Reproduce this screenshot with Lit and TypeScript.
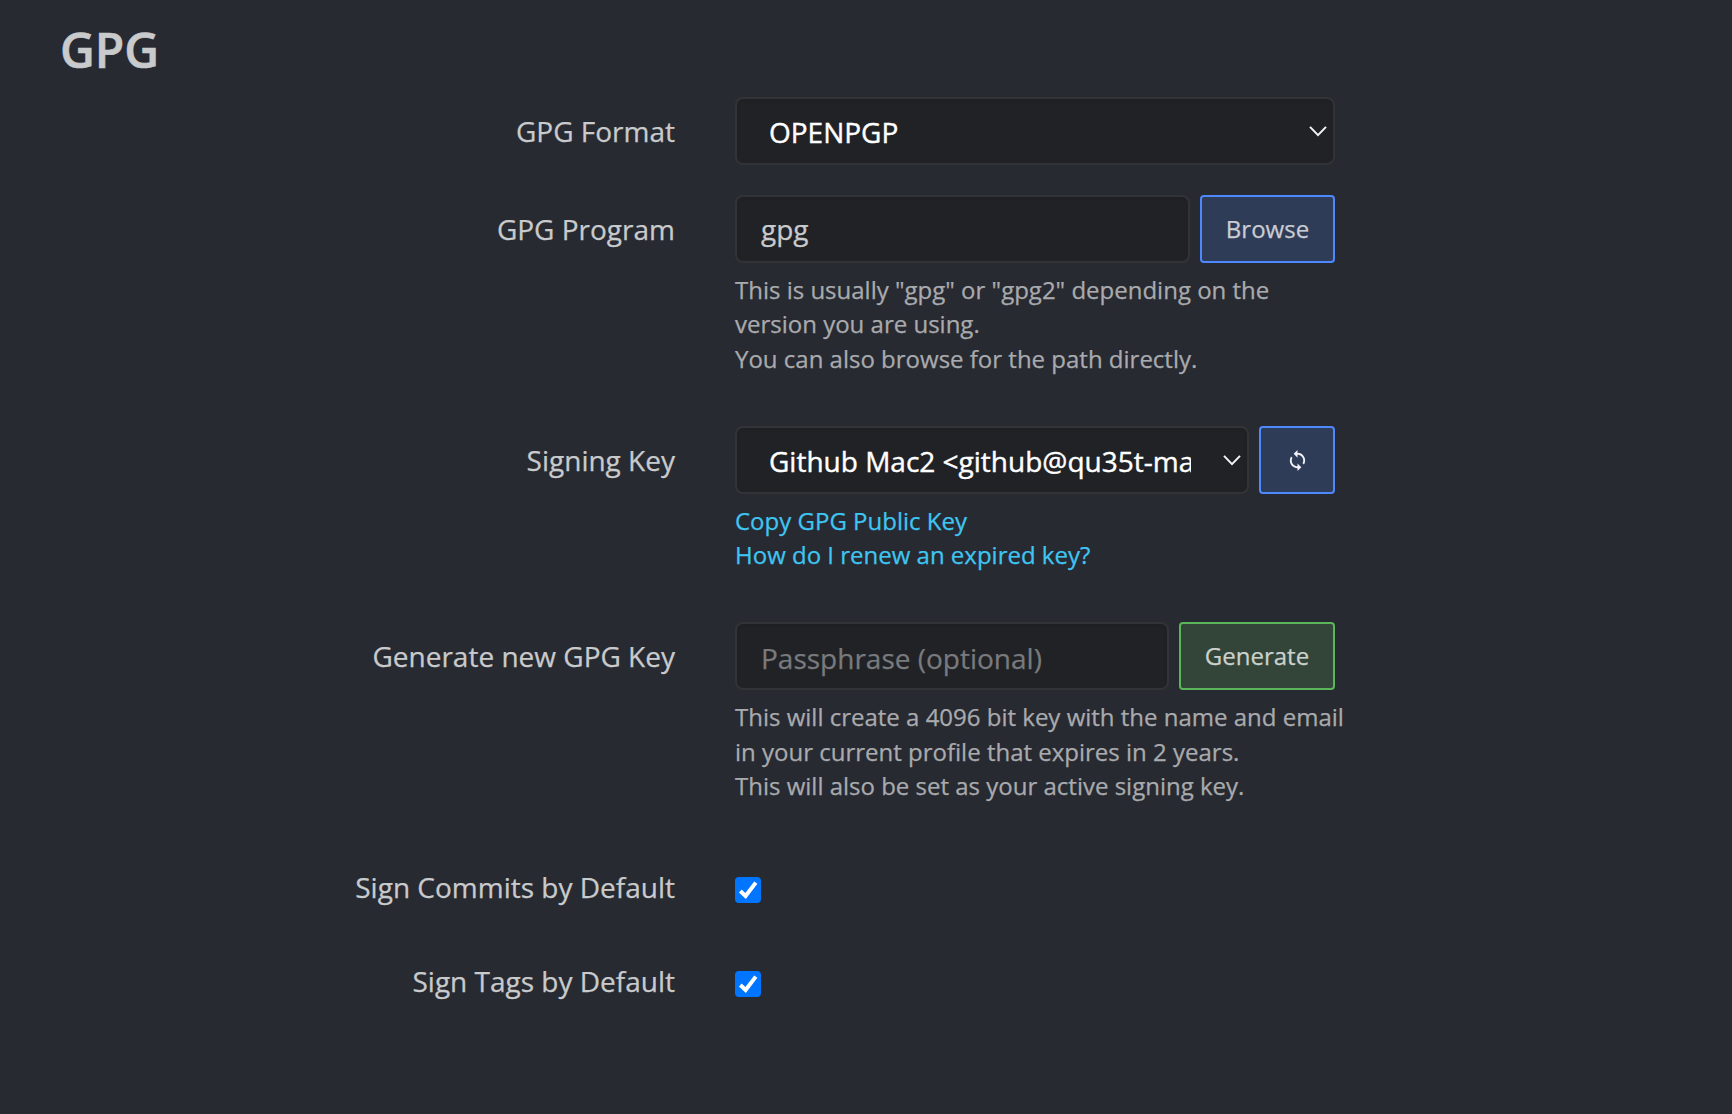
import { LitElement, html, css, svg } from "lit";
import { customElement, property } from "lit/decorators.js";

const chevron = html`<svg class="chevron" width="20" height="12" viewBox="0 0 20 12" aria-hidden="true">
  ${svg`<path d="M2 1.9 L10 10.1 L18 1.9" fill="none" stroke="#f4f4f5" stroke-width="2" />`}
</svg>`;

const syncIcon = html`<svg width="23" height="23" viewBox="0 0 24 24" aria-hidden="true">
  ${svg`<path fill="#f1f3f7" d="M12 4V1L8 5l4 4V6c3.31 0 6 2.69 6 6 0 1.01-.25 1.97-.7 2.8l1.46 1.46C19.54 15.03 20 13.57 20 12c0-4.42-3.58-8-8-8zm0 14c-3.31 0-6-2.69-6-6 0-1.01.25-1.97.7-2.8L5.24 7.74C4.46 8.97 4 10.43 4 12c0 4.42 3.58 8 8 8v3l4-4-4-4v3z" />`}
</svg>`;

/** One labelled row of the settings form. */
@customElement("form-row")
export class FormRow extends LitElement {
  @property() label = "";

  static styles = css`
    :host {
      display: grid;
      grid-template-columns: 675px 620px;
      column-gap: 60px;
      align-items: start;
    }
    .label {
      padding-top: 14px;
      text-align: right;
      line-height: 40px;
      white-space: nowrap;
    }
  `;

  render() {
    return html`<div class="label">${this.label}</div>
      <div><slot></slot></div>`;
  }
}

@customElement("app-root")
export class AppRoot extends LitElement {
  static styles = css`
    :host {
      display: block;
      box-sizing: border-box;
      width: 100%;
      height: 1114px;
      overflow: hidden;
      background: #282a32;
      color: #c9cacc;
      font: 28px/40px "Open Sans", sans-serif;
      -webkit-text-stroke: 0.25px;
    }
    .title {
      margin: 0;
      padding: 17px 0 14px 60px;
      font-size: 48px;
      font-weight: 600;
      line-height: 66px;
      -webkit-text-stroke: 0.6px;
    }
    .row { margin-bottom: 50px; }
    .row.tight { margin-bottom: 30px; }
    .controls {
      display: flex;
      gap: 10px;
      width: 600px;
      height: 68px;
    }
    .field {
      box-sizing: border-box;
      flex: 1;
      min-width: 0;
      height: 68px;
      border: 2px solid #323336;
      border-radius: 8px;
      background: #202226;
      box-shadow: inset 0 2px 2px rgba(0, 0, 0, 0.075);
      font: inherit;
      color: #c9cacc;
    }
    .text {
      margin: 0;
      padding: 3px 24px;
      outline: none;
      -webkit-text-stroke: 0.25px;
    }
    .text.empty { padding: 5px 24px 1px; }
    .text::placeholder { color: #797a7d; opacity: 1; }
    .select {
      display: flex;
      align-items: center;
      padding: 0 5px 0 32px;
      color: #fff;
      -webkit-text-stroke: 0.4px;
    }
    .value {
      flex: 1;
      min-width: 0;
      margin-right: 31px;
      padding-top: 2px;
      overflow: hidden;
      white-space: nowrap;
    }
    .chevron { flex: none; }
    .btn {
      box-sizing: border-box;
      display: flex;
      align-items: center;
      justify-content: center;
      flex: none;
      height: 68px;
      margin: 0;
      padding: 0;
      border: 2px solid;
      border-radius: 4px;
      font: 24px/34px "Open Sans", sans-serif;
      color: #c9cacc;
      -webkit-text-stroke: 0.25px;
    }
    .blue { border-color: #4d88ff; background: #2f3c57; color: #c9ccd3; }
    .green { border-color: #5ab55b; background: #334538; color: #ccd1cd; }
    .browse { width: 135px; }
    .refresh { width: 76px; }
    .refresh svg { margin-top: 1px; }
    .generate { width: 156px; }
    .help {
      margin-top: 10px;
      font-size: 24px;
      line-height: 34.28px;
      color: #a9aaad;
      white-space: nowrap;
    }
    .link { color: #3fc5f1; text-decoration: none; }
    .check-row { margin-bottom: 40px; }
    .check {
      display: flex;
      height: 54px;
      align-items: flex-start;
      padding-top: 24px;
      box-sizing: border-box;
    }
    .box {
      width: 26px;
      height: 26px;
      border-radius: 4px;
      background: #0075ff;
    }
  `;

  private checkbox(label: string) {
    return html`<form-row class="check-row" label=${label}>
      <div class="check" role="checkbox" aria-checked="true">
        <svg class="box" viewBox="0 0 26 26" aria-hidden="true">
          <path d="M5.3 14 L10.6 19 L20.8 5.6" fill="none" stroke="#fff" stroke-width="4" />
        </svg>
      </div>
    </form-row>`;
  }

  render() {
    return html`
      <h1 class="title">GPG</h1>
      <form-row class="row tight" label="GPG Format">
        <div class="controls">
          <div class="field select"><span class="value">OPENPGP</span>${chevron}</div>
        </div>
      </form-row>
      <form-row class="row" label="GPG Program">
        <div class="controls">
          <input class="field text" .value=${"gpg"} />
          <button class="btn blue browse">Browse</button>
        </div>
        <div class="help">This is usually "gpg" or "gpg2" depending on the<br />version you are using.<br />You can also browse for the path directly.</div>
      </form-row>
      <form-row class="row" label="Signing Key">
        <div class="controls">
          <div class="field select"><span class="value">Github Mac2 &lt;github@qu35t-ma</span>${chevron}</div>
          <button class="btn blue refresh">${syncIcon}</button>
        </div>
        <div class="help"><a class="link">Copy GPG Public Key</a><br /><a class="link">How do I renew an expired key?</a></div>
      </form-row>
      <form-row class="row" label="Generate new GPG Key">
        <div class="controls">
          <input class="field text empty" placeholder="Passphrase (optional)" />
          <button class="btn green generate">Generate</button>
        </div>
        <div class="help">This will create a 4096 bit key with the name and email<br />in your current profile that expires in 2 years.<br />This will also be set as your active signing key.</div>
      </form-row>
      ${this.checkbox("Sign Commits by Default")}
      ${this.checkbox("Sign Tags by Default")}
    `;
  }
}
